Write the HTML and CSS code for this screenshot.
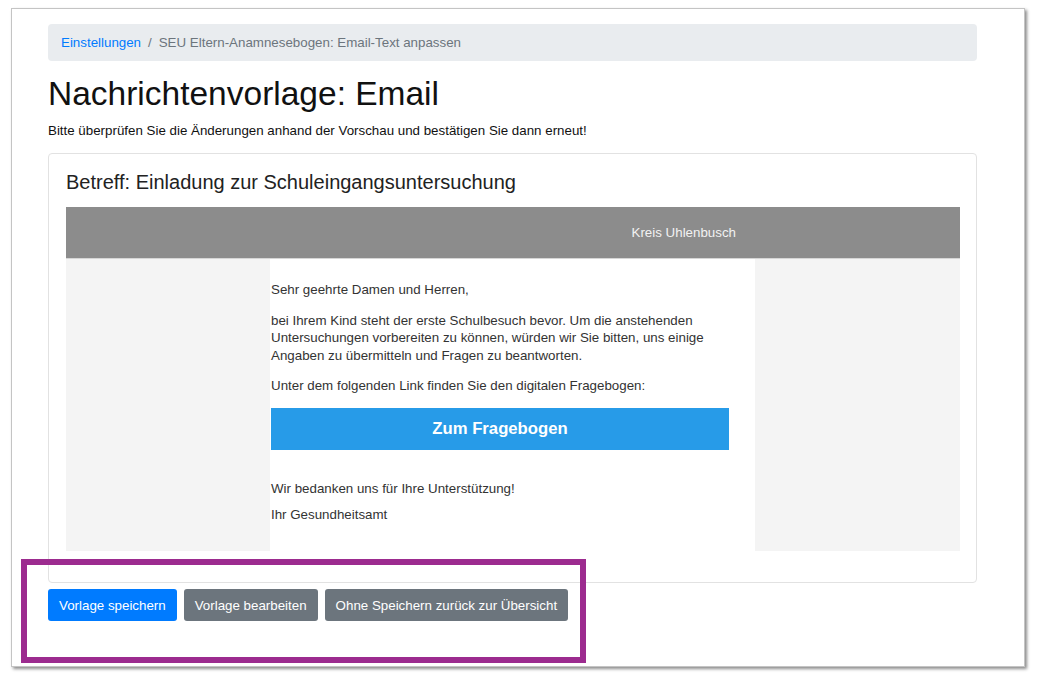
FILE: index.html
```html
<!DOCTYPE html>
<html lang="de">
<head>
<meta charset="utf-8">
<title>Nachrichtenvorlage: Email</title>
<link rel="stylesheet" href="styles.css">
</head>
<body>
<div class="window">
  <nav class="breadcrumb">
    <a class="crumb-link" href="#">Einstellungen</a>
    <span class="crumb-sep">/</span>
    <span class="crumb-active">SEU Eltern-Anamnesebogen: Email-Text anpassen</span>
  </nav>
  <h1 class="page-title">Nachrichtenvorlage: Email</h1>
  <p class="page-hint">Bitte überprüfen Sie die Änderungen anhand der Vorschau und bestätigen Sie dann erneut!</p>

  <div class="card">
    <h4 class="card-title">Betreff: Einladung zur Schuleingangsuntersuchung</h4>
    <div class="mail">
      <div class="mail-header">
        <div class="mail-side"></div>
        <div class="mail-header-text">Kreis Uhlenbusch</div>
        <div class="mail-side"></div>
      </div>
      <div class="mail-body">
        <div class="mail-gutter"></div>
        <div class="mail-content">
          <p class="mail-p">Sehr geehrte Damen und Herren,</p>
          <p class="mail-p">bei Ihrem Kind steht der erste Schulbesuch bevor. Um die anstehenden Untersuchungen vorbereiten zu können, würden wir Sie bitten, uns einige Angaben zu übermitteln und Fragen zu beantworten.</p>
          <p class="mail-p">Unter dem folgenden Link finden Sie den digitalen Fragebogen:</p>
          <a class="mail-button" href="#">Zum Fragebogen</a>
          <p class="mail-p mail-thanks">Wir bedanken uns für Ihre Unterstützung!</p>
          <p class="mail-p mail-sign">Ihr Gesundheitsamt</p>
        </div>
        <div class="mail-gutter"></div>
      </div>
    </div>
  </div>

  <div class="actions">
    <button class="btn btn-primary">Vorlage speichern</button>
    <button class="btn btn-secondary">Vorlage bearbeiten</button>
    <button class="btn btn-secondary">Ohne Speichern zurück zur Übersicht</button>
  </div>
</div>
<div class="highlight"></div>
</body>
</html>
```

FILE: styles.css
```css
html, body {
  margin: 0;
  padding: 0;
  background: #ffffff;
}

body {
  font-family: "Liberation Sans", Arial, sans-serif;
  color: #212529;
  width: 1038px;
  height: 684px;
  overflow: hidden;
  position: relative;
}

.window {
  box-sizing: border-box;
  margin: 8px 0 0 11px;
  width: 1014px;
  height: 659px;
  border: 1px solid #c4c4c4;
  box-shadow: 2px 2px 3px rgba(0, 0, 0, 0.45);
  background: #fff;
  padding: 15px 0 0 36px;
}

.breadcrumb {
  box-sizing: border-box;
  width: 929px;
  height: 37px;
  background: #e9ecef;
  border-radius: 4px;
  display: flex;
  align-items: center;
  padding: 0 13px;
  font-size: 13.33px;
}

.crumb-link {
  color: #007bff;
  text-decoration: none;
}

.crumb-sep {
  color: #6c757d;
  padding: 0 7px;
}

.crumb-active {
  color: #6c757d;
}

.page-title {
  margin: 14px 0 0;
  font-size: 33.5px;
  line-height: 38px;
  font-weight: 400;
  color: #111;
}

.page-hint {
  margin: 8px 0 0;
  font-size: 13.33px;
  line-height: 19px;
  color: #111;
}

.card {
  box-sizing: border-box;
  width: 929px;
  margin-top: 13px;
  border: 1px solid #e2e2e2;
  border-radius: 4px;
  padding: 16px 16px 31px 17px;
}

.card-title {
  margin: 0 0 13px;
  font-size: 20px;
  line-height: 24px;
  font-weight: 400;
  color: #222;
}

.mail {
  width: 894px;
}

.mail-header {
  display: grid;
  grid-template-columns: 204px 485px 205px;
  height: 51px;
  background: #8c8c8c;
  border-bottom: 1px solid #d6d6d6;
}

.mail-header-text {
  display: flex;
  align-items: center;
  justify-content: flex-end;
  padding-right: 19px;
  font-size: 13.33px;
  color: #f2f2f2;
}

.mail-body {
  display: grid;
  grid-template-columns: 204px 485px 205px;
  height: 292px;
}

.mail-gutter {
  background: #f4f4f4;
}

.mail-content {
  padding: 22px 26px 0 1px;
  font-size: 13.33px;
  line-height: 17.5px;
  color: #333;
}

.mail-p {
  margin: 0 0 13px;
}

.mail-button {
  display: flex;
  align-items: center;
  justify-content: center;
  height: 42px;
  margin-top: 6px;
  background: #279be8;
  color: #fff;
  font-weight: 700;
  font-size: 16.7px;
  text-decoration: none;
}

.mail-thanks {
  margin-top: 30px;
  margin-bottom: 8.5px;
}

.mail-sign {
  margin: 0;
}

.actions {
  display: flex;
  gap: 7px;
  margin-top: 6px;
}

.btn {
  font-family: "Liberation Sans", Arial, sans-serif;
  font-size: 13.33px;
  height: 32px;
  padding: 0 11px;
  border: none;
  border-radius: 3px;
  color: #fff;
  cursor: pointer;
}

.btn-primary {
  background: #007bff;
}

.btn-secondary {
  background: #6c757d;
}

.highlight {
  position: absolute;
  left: 21px;
  top: 559px;
  width: 565px;
  height: 104px;
  box-sizing: border-box;
  border: 6px solid #9c2b8f;
}
```
